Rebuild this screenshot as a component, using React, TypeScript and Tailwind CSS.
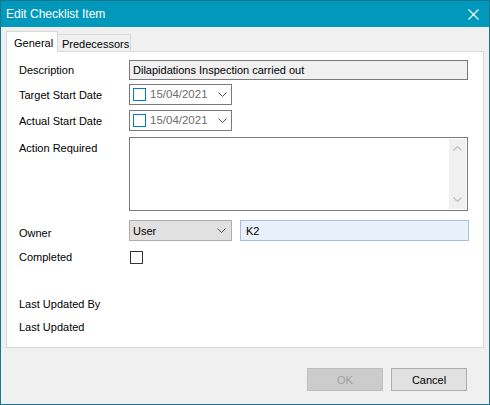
import React from 'react'

function Chevron({ className = '' }: { className?: string }) {
  return (
    <svg width="9" height="5" viewBox="0 0 9 5" className={className}>
      <path d="M0.5 0.5 L4.5 4.5 L8.5 0.5" fill="none" stroke="#505050" strokeWidth="1" />
    </svg>
  )
}

function DatePicker({ value }: { value: string }) {
  return (
    <div className="w-[103px] h-[21px] border border-[#7a7a7a] bg-white flex items-center pl-[3px] pr-[4px]">
      <div className="w-[13px] h-[13px] border border-[#0078d7] bg-white shrink-0" />
      <span className="ml-[4px] text-[#6d6d6d] text-[11.5px] leading-none">{value}</span>
      <Chevron className="ml-auto" />
    </div>
  )
}

function Row({
  label,
  children,
  className = '',
  top = false,
  labelClass = '',
}: {
  label: string
  children?: React.ReactNode
  className?: string
  top?: boolean
  labelClass?: string
}) {
  return (
    <div className={`flex ${top ? 'items-start' : 'items-center'} ${className}`}>
      <div className={`w-[110px] shrink-0 ${top ? 'pt-[4px]' : ''} ${labelClass}`}>{label}</div>
      {children}
    </div>
  )
}

export default function App() {
  return (
    <div className="w-[490px] h-[405px] border border-[#17758c] bg-[#f0f0f0] flex flex-col font-['Liberation_Sans',Arial,sans-serif] text-[11px] text-black leading-[14px]">
      {/* title bar */}
      <div className="h-[26px] bg-[#0099bc] flex items-center pl-[5px] pr-[10px] shrink-0">
        <span className="text-white text-[12px]">Edit Checklist Item</span>
        <svg width="11" height="11" viewBox="0 0 11 11" className="ml-auto">
          <path d="M0.5 0.5 L10.5 10.5 M10.5 0.5 L0.5 10.5" stroke="white" strokeWidth="1.1" />
        </svg>
      </div>

      {/* tabs */}
      <div className="flex items-end mt-[4px] pl-[5px] h-[20px] shrink-0 relative z-10">
        <div className="w-[52px] h-[21px] bg-white border border-b-0 border-[#d9d9d9] pl-[7px] pt-[4px] -mb-px">
          General
        </div>
        <div className="w-[73px] h-[17px] bg-[#f0f0f0] border border-b-0 border-l-0 border-[#d9d9d9] pl-[4px] pt-[2px]">
          Predecessors
        </div>
      </div>

      {/* tab page */}
      <div className="mx-[5px] h-[297px] bg-white border border-[#d9d9d9] flex flex-col pl-[12px] shrink-0">
        <Row label="Description" className="mt-[8px]">
          <div className="w-[339px] h-[20px] border border-[#7a7a7a] bg-[#f0f0f0] flex items-center pl-[3px]">
            Dilapidations Inspection carried out
          </div>
        </Row>
        <Row label="Target Start Date" className="mt-[4px]">
          <DatePicker value="15/04/2021" />
        </Row>
        <Row label="Actual Start Date" className="mt-[5px]">
          <DatePicker value="15/04/2021" />
        </Row>
        <Row label="Action Required" className="mt-[6px]" top>
          <div className="w-[339px] h-[74px] border border-[#7a7a7a] bg-white flex justify-end p-px">
            <div className="w-[17px] h-full bg-[#f0f0f0] flex flex-col items-center justify-between py-[7px]">
              <svg width="9" height="5" viewBox="0 0 9 5">
                <path d="M0.5 4.5 L4.5 0.5 L8.5 4.5" fill="none" stroke="#c2c2c2" strokeWidth="1.3" />
              </svg>
              <svg width="9" height="5" viewBox="0 0 9 5">
                <path d="M0.5 0.5 L4.5 4.5 L8.5 0.5" fill="none" stroke="#c2c2c2" strokeWidth="1.3" />
              </svg>
            </div>
          </div>
        </Row>
        <Row label="Owner" className="mt-[9px]" labelClass="pt-[4px]">
          <div className="w-[103px] h-[21px] border border-[#adadad] bg-[#e1e1e1] flex items-center pl-[3px] pr-[5px]">
            <span>User</span>
            <Chevron className="ml-auto" />
          </div>
          <div className="ml-[8px] w-[229px] h-[21px] border border-[#a4c0e4] bg-[#e8f0fa] flex items-center pl-[5px]">
            K2
          </div>
        </Row>
        <Row label="Completed" className="mt-[9px]">
          <div className="w-[13px] h-[13px] border border-[#333333] bg-white ml-px" />
        </Row>
        <div className="mt-[33px]">Last Updated By</div>
        <div className="mt-[9px]">Last Updated</div>
      </div>

      {/* buttons */}
      <div className="flex justify-end gap-[8px] mt-[20px] pr-[22px]">
        <button className="w-[76px] h-[23px] bg-[#cccccc] border border-[#bfbfbf] text-[#a0a0a0]">OK</button>
        <button className="w-[76px] h-[23px] bg-[#e1e1e1] border border-[#adadad] text-black">Cancel</button>
      </div>
    </div>
  )
}
